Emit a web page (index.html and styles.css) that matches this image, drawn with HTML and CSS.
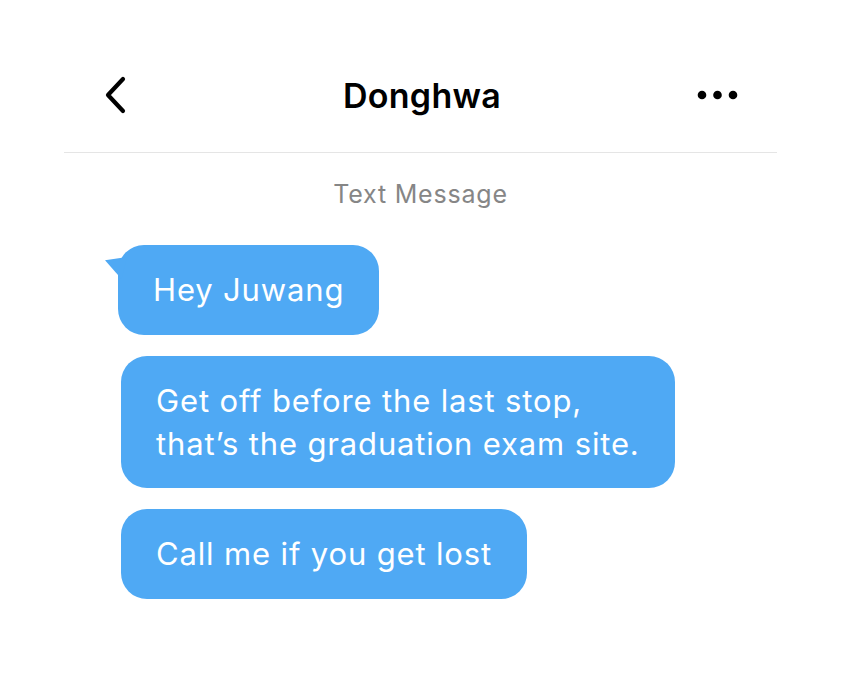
FILE: index.html
```html
<html>

<head>
    <meta charset="UTF-8">
    <meta name="viewport" content="width=device-width,initial-scale=1">
    <link rel="stylesheet" href="styles.css">
</head>

<body>
    <div id="root">
        <div class="header">
            <button class="icon back" aria-label="Back">
                <svg width="24" height="38" viewBox="0 0 24 38">
                    <path d="M19 3 L4 19 L19 35" fill="none" stroke="#000" stroke-width="4.2" stroke-linecap="round" stroke-linejoin="round" />
                </svg>
            </button>
            <div class="title">Donghwa</div>
            <button class="icon more" aria-label="More">
                <svg width="44" height="12" viewBox="0 0 44 12">
                    <circle cx="6" cy="6" r="4.3" fill="#000" />
                    <circle cx="21.5" cy="6" r="4.3" fill="#000" />
                    <circle cx="37" cy="6" r="4.3" fill="#000" />
                </svg>
            </button>
        </div>
        <div class="kind">Text Message</div>
        <div class="messages">
            <div class="bubble first">Hey Juwang</div>
            <div class="bubble">Get off before the last stop,<br>that’s the graduation exam site.</div>
            <div class="bubble">Call me if you get lost</div>
        </div>
    </div>
</body>

</html>
```

FILE: styles.css
```css
* {
    margin: 0;
    padding: 0;
    box-sizing: border-box;
    font-family: Inter, "Noto Sans", sans-serif;
}

body {
    background-color: white;
    color: black;
}

#root {
    width: 713px;
    margin-left: 64px;
}

.header {
    display: grid;
    grid-template-columns: 1fr auto 1fr;
    align-items: center;
    height: 153px;
    padding: 58px 37px 20px 40px;
    border-bottom: 1px solid rgb(229, 229, 229);
}

.icon {
    border: none;
    background: none;
    display: flex;
    align-items: center;
}

.more {
    justify-self: end;
}

.title {
    font-size: 34px;
    font-weight: 600;
    letter-spacing: 0.3px;
}

.kind {
    text-align: center;
    font-size: 25px;
    letter-spacing: 0.8px;
    color: rgb(134, 134, 134);
    margin-top: 24px;
    line-height: 34px;
}

.messages {
    display: flex;
    flex-direction: column;
    align-items: flex-start;
    gap: 21px;
    padding-left: 57px;
    margin-top: 34px;
}

.bubble {
    position: relative;
    background-color: rgb(79, 169, 244);
    color: white;
    font-size: 31px;
    letter-spacing: 0.85px;
    line-height: 43px;
    padding: 23px 35px 23.5px;
    border-radius: 26px;
}

.bubble.first {
    margin-left: -3px;
}

.bubble.first::before {
    content: "";
    position: absolute;
    left: -13px;
    top: 12px;
    width: 22px;
    height: 22px;
    background-color: rgb(79, 169, 244);
    clip-path: polygon(0 15%, 100% 0, 75% 100%);
}
```
